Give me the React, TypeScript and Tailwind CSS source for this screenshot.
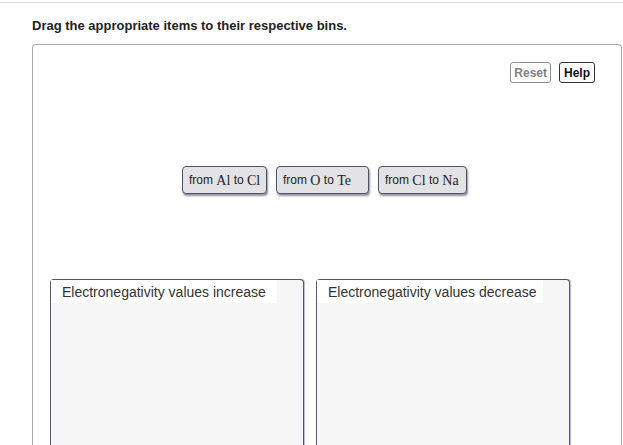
import React from "react";

const tiles = [
  { a: "Al", b: "Cl", w: "w-[85px]" },
  { a: "O", b: "Te", w: "w-[93px]" },
  { a: "Cl", b: "Na", w: "w-[89px]" },
];

const bins = ["Electronegativity values increase", "Electronegativity values decrease"];

export default function App() {
  return (
    <div className="h-[445px] overflow-hidden bg-white font-['Liberation_Sans',Arial,sans-serif]">
      <div className="h-[3px] border-b border-[#dedede]" />
      <h1 className="ml-[32px] mt-[15px] text-[13px] font-bold leading-[15px] text-[#222]">
        Drag the appropriate items to their respective bins.
      </h1>
      <div className="ml-[32px] mr-[1px] mt-[11px] h-[420px] rounded-t-[4px] border border-b-0 border-[#a9a9a9]">
        <div className="flex justify-end gap-[8px] pr-[26px] pt-[17px]">
          <button className="h-[21px] rounded-[3px] border border-[#8a9095] px-[3px] text-[12px] font-bold text-[#7d8186]">
            Reset
          </button>
          <button className="h-[21px] rounded-[3px] border border-[#333] px-[4px] text-[12px] font-bold text-[#111]">
            Help
          </button>
        </div>

        <div className="ml-[149px] mt-[83px] flex gap-[9px]">
          {tiles.map((t, i) => (
            <div
              key={i}
              className={`${t.w} flex h-[28px] items-center rounded-[4px] border-[1.5px] border-[#50526a] bg-[#e3e3e5] pl-[6px] text-[12px] text-[#222] shadow-[1px_2px_2px_rgba(60,60,80,0.55)]`}
            >
              <span>from&nbsp;</span>
              <span className="font-['Liberation_Serif',serif] text-[14px]">{t.a}</span>
              <span>&nbsp;to&nbsp;</span>
              <span className="font-['Liberation_Serif',serif] text-[14px]">{t.b}</span>
            </div>
          ))}
        </div>

        <div className="ml-[17px] mt-[85px] flex gap-[12px]">
          {bins.map((b) => (
            <div
              key={b}
              className="h-[200px] w-[254px] rounded-t-[4px] border-[1.5px] border-b-0 border-[#55566a] bg-[#f6f6f7] shadow-[1px_0_1px_rgba(80,80,100,0.4)]"
            >
              <div className="h-[23px] w-[226px] bg-white pl-[11px] pt-[4px] text-[14px] leading-[16px] text-[#333]">
                {b}
              </div>
            </div>
          ))}
        </div>
      </div>
    </div>
  );
}
